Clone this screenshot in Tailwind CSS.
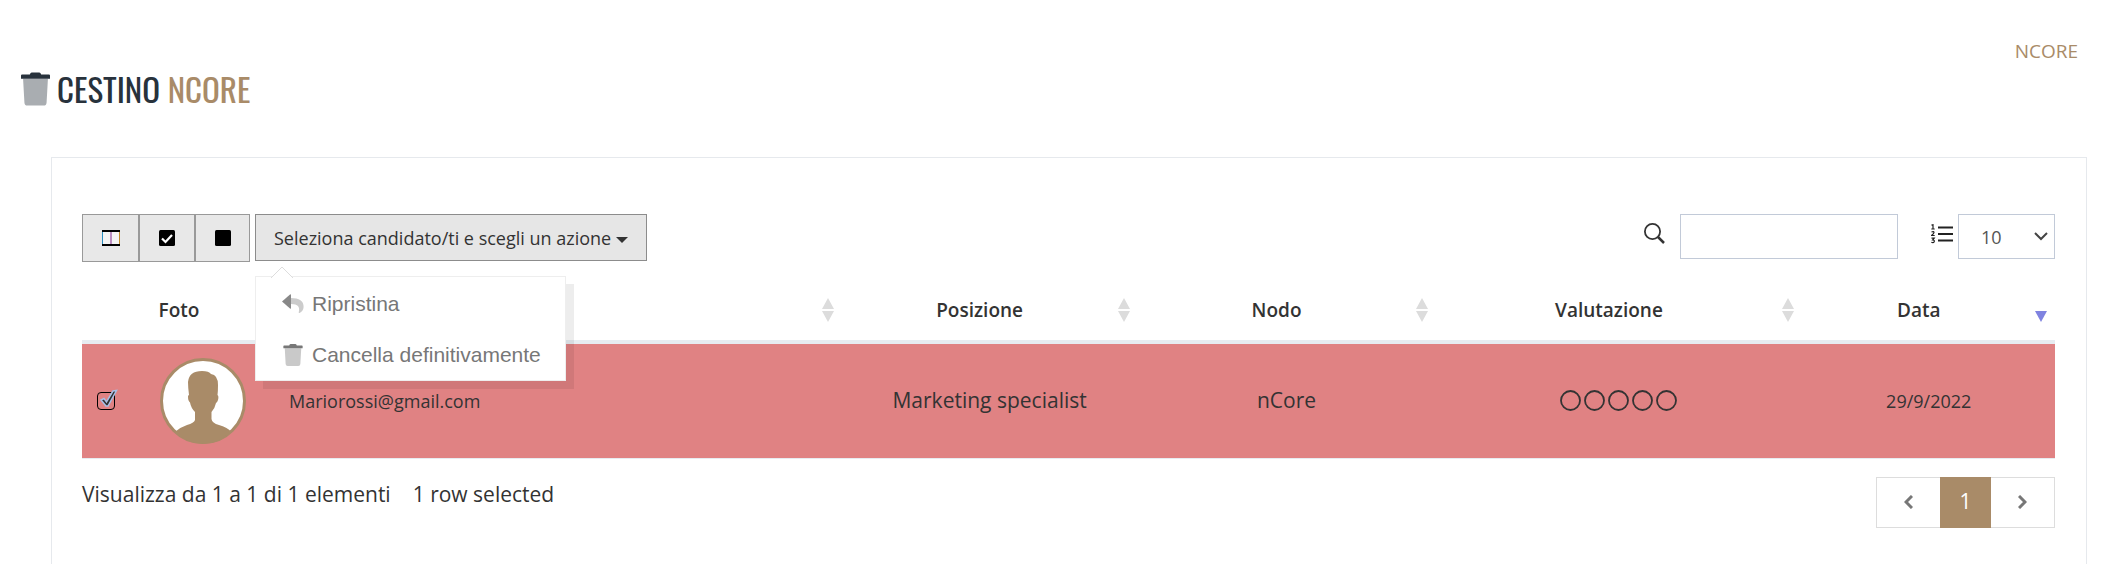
<!DOCTYPE html>
<html lang="it">
<head>
    <meta charset="UTF-8">
    <meta name="viewport" content="width=device-width, initial-scale=1.0">
    <title>Cestino nCore</title>
    <!-- Tailwind CSS -->
    <script src="https://cdn.jsdelivr.net/npm/@tailwindcss/browser@4"></script>
</head>
<body class="bg-white font-['Open_Sans',sans-serif] text-[#333]">
    <!-- Shared icons -->
    <svg class="hidden">
        <symbol id="trash" viewBox="0 0 448 512">
            <path fill="currentColor" opacity=".4" d="M32 96h384l-21 372a48 48 0 0 1-48 44H101a48 48 0 0 1-48-44z"/>
            <path fill="currentColor" d="M0 48a16 16 0 0 1 16-16h120l10-20a24 24 0 0 1 21-12h114a24 24 0 0 1 21 12l10 20h120a16 16 0 0 1 16 16v48H0z"/>
        </symbol>
        <symbol id="sort" viewBox="0 0 12 24">
            <path fill="#dcdcdc" d="M6 0l6 11H0zM0 13h12L6 24z"/>
        </symbol>
    </svg>

    <!-- Page header -->
    <header class="pl-[21px] pr-[25px] pt-[37px]">
        <nav class="flex justify-end">
            <a href="#" class="text-[19px] leading-7 text-[#a98b68]">NCORE</a>
        </nav>
        <h1 class="flex items-center gap-[7px] h-12 text-[33px] leading-[48px] text-[#28323c] font-['Oswald',sans-serif]">
            <svg class="w-[29px] h-[34px]"><use href="#trash"/></svg>
            <span>CESTINO <span class="text-[#a98b68]">NCORE</span></span>
        </h1>
    </header>

    <main class="mt-11 ml-[51px] mr-4 pl-[30px] pr-[31px] pt-14 pb-9 border border-b-0 border-[#e6e9ed]">
        <!-- Toolbar -->
        <div class="flex items-start h-[66px]">
            <div class="flex w-[168px] h-12 border border-[#999] bg-[#e8e8e8] divide-x-2 divide-[#999]">
                <button type="button" aria-label="Colonne" class="w-[57px] flex items-center justify-center">
                    <svg class="w-[18px] h-4" viewBox="0 0 18 16" fill="none">
                        <rect x=".5" y="1" width="17" height="14" fill="#f4f4f4"/>
                        <path d="M.5 1v14" stroke="#2a8fc0"/>
                        <path d="M17.500 1v14" stroke="#c08a2a"/>
                        <path d="M0 1h18M0 15h18" stroke="#000" stroke-width="2"/>
                        <path d="M9 2v12" stroke="#81278a"/>
                    </svg>
                </button>
                <button type="button" aria-label="Seleziona tutti" class="w-14 flex items-center justify-center">
                    <svg class="size-4" viewBox="0 0 16 16">
                        <rect width="16" height="16" rx="1.5"/>
                        <path d="M3 8.500l3.500 3.500L13 5" fill="none" stroke="#fff" stroke-width="2.2"/>
                    </svg>
                </button>
                <button type="button" aria-label="Deseleziona tutti" class="flex-1 flex items-center justify-center">
                    <svg class="size-4" viewBox="0 0 16 16"><rect width="16" height="16" rx="1.5"/></svg>
                </button>
            </div>

            <!-- Action dropdown -->
            <div class="relative ml-[5px]">
                <button type="button" aria-expanded="true" class="flex items-center gap-[5px] h-[47px] px-[18px] border border-[#8c8c8c] bg-[#e6e6e6] text-lg">
                    Seleziona candidato/ti e scegli un azione
                    <svg class="w-3 h-[6px] mt-1" viewBox="0 0 12 6"><path fill="#333" d="M0 0h12L6 6z"/></svg>
                </button>
                <div class="absolute z-10 top-[62px] left-0 w-[311px] h-[105px] pt-px border border-[#eee] bg-white shadow-[8px_8px_0_rgba(0,0,0,0.07)] font-['Liberation_Sans',sans-serif] text-[21px] text-[#777]">
                    <svg class="absolute -top-[11px] left-[14px] w-6 h-3" viewBox="0 0 24 12"><path fill="#fff" stroke="#ddd" d="M1 12L12 1l11 11"/></svg>
                    <ul>
                        <li>
                            <a href="#" class="flex items-center h-[51px] pl-[26px] gap-2">
                                <svg class="w-[22px] h-[19px]" viewBox="0 0 22 19">
                                    <path fill="#ccc" d="M9 4c8 0 13 3 12.600 9 0 3-2 5-4 6-1 0-1-.5-.7-1.500C18 13 16 10 9 10z"/>
                                    <path fill="#888" d="M0 7.500L8 .5q1-.8 1 .5v13q0 1.300-1 .5z"/>
                                </svg>
                                Ripristina
                            </a>
                        </li>
                        <li>
                            <a href="#" class="flex items-center h-[51px] pl-[26px] gap-2">
                                <svg class="w-[22px] h-[22px]"><use href="#trash"/></svg>
                                Cancella definitivamente
                            </a>
                        </li>
                    </ul>
                </div>
            </div>

            <!-- Search and page length -->
            <div class="flex items-start ml-auto">
                <label for="search" class="pt-[9px] mr-[15px]" aria-label="Cerca">
                    <svg class="size-[21px]" viewBox="0 0 21 21" fill="none" stroke="#333" stroke-width="1.8">
                        <circle cx="8.500" cy="8.500" r="7.600"/>
                        <path d="M14 14l6 6" stroke-width="2.500"/>
                    </svg>
                </label>
                <input id="search" type="search" class="w-[218px] h-[45px] px-3 border border-[#c2cad8] bg-white">
                <label for="length" class="pt-[10px] ml-[33px] mr-[5px]" aria-label="Elementi per pagina">
                    <svg class="w-[22px] h-5" viewBox="0 0 22 20" fill="none" stroke="#222">
                        <path d="M7 3.500h15M7 10h15M7 16.500h15" stroke-width="2"/>
                        <path d="M.5 1.200l1.500-.4v4.200M.3 5h3.400M.5 8q2.500-1 2.500.5 0 1-2.500 3h3.200M.5 14.200h2.700L1.700 16q2 0 1.500 1.700-.6 1.300-2.900.6" stroke-width="1.200"/>
                    </svg>
                </label>
                <div class="relative">
                    <select id="length" class="appearance-none w-[97px] h-[45px] pl-[22px] border border-[#c2cad8] bg-white text-lg text-[#555]">
                        <option>10</option>
                        <option>25</option>
                        <option>50</option>
                    </select>
                    <svg class="absolute right-[7px] top-[18px] w-[14px] h-[9px] pointer-events-none" viewBox="0 0 14 9" fill="none" stroke="#444" stroke-width="2"><path d="M1 1l6 6 6-6"/></svg>
                </div>
            </div>
        </div>

        <!-- Candidates -->
        <table class="w-full table-fixed border-collapse">
            <colgroup>
                <col class="w-12">
                <col class="w-[146px]">
                <col>
                <col class="w-[15%]">
                <col class="w-[15.1%]">
                <col class="w-[18.6%]">
                <col class="w-[12.8%]">
            </colgroup>
            <thead>
                <tr class="h-[62px] text-[19px]">
                    <th class="font-semibold" colspan="2">Foto</th>
                    <th><div class="flex items-center pr-2"><span class="flex-1"></span><svg class="w-3 h-6"><use href="#sort"/></svg></div></th>
                    <th class="font-semibold"><div class="flex items-center pr-2"><span class="flex-1">Posizione</span><svg class="w-3 h-6"><use href="#sort"/></svg></div></th>
                    <th class="font-semibold"><div class="flex items-center pr-2"><span class="flex-1">Nodo</span><svg class="w-3 h-6"><use href="#sort"/></svg></div></th>
                    <th class="font-semibold"><div class="flex items-center pr-2"><span class="flex-1">Valutazione</span><svg class="w-3 h-6"><use href="#sort"/></svg></div></th>
                    <th class="font-semibold" aria-sort="descending"><div class="flex items-center pr-2"><span class="flex-1">Data</span><svg class="w-3 h-6" viewBox="0 0 12 24"><path fill="#7f83e0" d="M0 13h12L6 24z"/></svg></div></th>
                </tr>
            </thead>
            <tbody>
                <tr class="h-[116px] bg-[#e08283] border-t-4 border-b border-t-[#e7ecf1] border-b-[#e7ecf1] text-[21px] text-center">
                    <td>
                        <div class="relative size-[18px] mx-auto">
                            <input type="checkbox" checked aria-label="Seleziona riga" class="block appearance-none size-[18px] border border-black rounded-[4px]">
                            <svg class="absolute left-[2px] -top-[3px] w-[19px] h-[19px] pointer-events-none" viewBox="0 0 19 19">
                                <path fill="#333" stroke="#a9bfe6" stroke-width="1.500" d="M2 11l3-1.500 2.500 3.500L14 2l3.500-.5L9 17H7z"/>
                            </svg>
                        </div>
                    </td>
                    <td>
                        <svg class="size-[86px] mx-auto" viewBox="0 0 86 86">
                            <circle cx="43" cy="43" r="41.500" fill="#fff" stroke="#a98b68" stroke-width="3"/>
                            <path fill="#a98b68" d="M35 62V54Q31 50 30 44.500 28 43 28 38.500 28 37 29 37 28 29 28 24 29 13 42 13 49 13 51 16 58 17 58 27 58 33 57.500 37 59 38 58 42 57 45 56 45 55 50 51.500 54V61Q52 65 59 67 67 69 71 73.500 59 86 43 86 27 86 15.500 73.500 21 69 27 67 34 65 35 62z"/>
                        </svg>
                    </td>
                    <td class="pl-[13px] text-left text-lg">Mariorossi@gmail.com</td>
                    <td>Marketing specialist</td>
                    <td>nCore</td>
                    <td>
                        <svg class="w-[118px] h-[21px] mx-auto" viewBox="0 0 118 21" fill="none" stroke="#333" stroke-width="1.800">
                            <circle cx="10.500" cy="10.500" r="9.500"/>
                            <circle cx="34.500" cy="10.500" r="9.500"/>
                            <circle cx="58.500" cy="10.500" r="9.500"/>
                            <circle cx="82.500" cy="10.500" r="9.500"/>
                            <circle cx="106.500" cy="10.500" r="9.500"/>
                        </svg>
                    </td>
                    <td class="text-lg">29/9/2022</td>
                </tr>
            </tbody>
        </table>

        <!-- Table footer -->
        <div class="flex items-start justify-between mt-[18px]">
            <p class="flex gap-[22px] pt-[3px] text-[21px] leading-7">
                <span>Visualizza da 1 a 1 di 1 elementi</span>
                <span>1 row selected</span>
            </p>
            <nav class="flex h-[51px] border border-[#ddd]">
                <a href="#" aria-label="Precedente" class="flex items-center justify-center w-[63px]">
                    <svg class="w-[9px] h-[14px]" viewBox="0 0 9 14" fill="none" stroke="#777" stroke-width="3"><path d="M8 1L2 7l6 6"/></svg>
                </a>
                <a href="#" class="flex items-center justify-center w-[51px] -my-px bg-[#a98b68] text-[21px] text-white">1</a>
                <a href="#" aria-label="Successivo" class="flex items-center justify-center w-[63px]">
                    <svg class="w-[9px] h-[14px]" viewBox="0 0 9 14" fill="none" stroke="#777" stroke-width="3"><path d="M1 1l6 6-6 6"/></svg>
                </a>
            </nav>
        </div>
    </main>
</body>
</html>
